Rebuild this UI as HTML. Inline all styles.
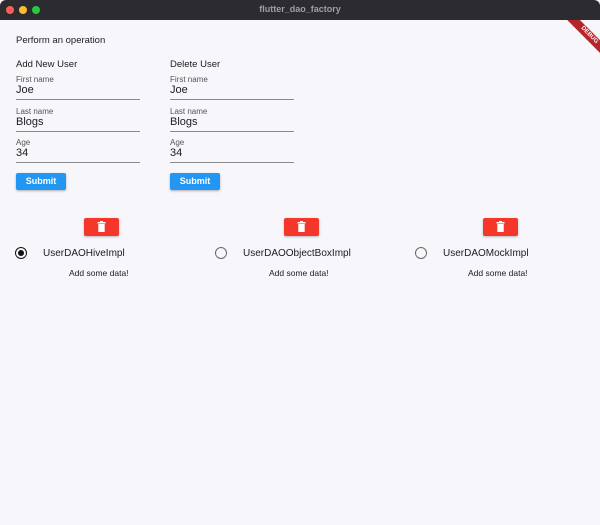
<!DOCTYPE html>
<html><head><style>
*{margin:0;padding:0;box-sizing:border-box}
body{width:600px;height:525px;overflow:hidden;background:#f7f6fa;font-family:"Liberation Sans",sans-serif;color:#1c1b1f;position:relative}
.bar{position:absolute;left:0;top:0;width:600px;height:20px;background:#2c2b2f;border-radius:6px 6px 0 0;z-index:2}
.dot{position:absolute;top:6px;width:8px;height:8px;border-radius:50%;z-index:3}
.title{position:absolute;top:4px;left:0;width:600px;text-align:center;font-size:9px;font-weight:bold;color:#a09fa3;z-index:3}
.t{position:absolute;white-space:nowrap}
.lab{font-size:8px;color:#555}
.val{font-size:11px}
.line{position:absolute;height:1px;background:#8a8a8e;width:124px}
.btn{position:absolute;width:50px;height:17px;background:#2196f3;border-radius:2px;color:#fff;font-size:9px;font-weight:bold;text-align:center;line-height:17px;box-shadow:0 1px 2px rgba(0,0,0,.3)}
.del{position:absolute;top:218px;width:35px;height:18px;background:#f4362b;border-radius:2px;box-shadow:0 1px 2px rgba(0,0,0,.25)}
.radio{position:absolute;top:247px;width:12px;height:12px;border-radius:50%;border:1.5px solid #666}
</style></head><body>
<div class="bar"></div>
<div class="dot" style="left:6px;background:#fe5f57"></div>
<div class="dot" style="left:19px;background:#febc2e"></div>
<div class="dot" style="left:32px;background:#28c840"></div>
<div class="title">flutter_dao_factory</div>
<div style="position:absolute;left:563px;top:31px;width:52px;height:9px;background:#b3262b;transform:rotate(45deg);color:#fff;font-size:6px;font-weight:bold;text-align:center;line-height:9px;z-index:1">DEBUG</div>

<div class="t" style="left:16px;top:35px;font-size:9.5px">Perform an operation</div>

<div class="t" style="left:16px;top:59px;font-size:9.5px">Add New User</div>
<div class="t lab" style="left:16px;top:75px">First name</div>
<div class="t val" style="left:16px;top:84px">Joe</div>
<div class="line" style="left:16px;top:99px"></div>
<div class="t lab" style="left:16px;top:107px">Last name</div>
<div class="t val" style="left:16px;top:116px">Blogs</div>
<div class="line" style="left:16px;top:131px"></div>
<div class="t lab" style="left:16px;top:138px">Age</div>
<div class="t val" style="left:16px;top:147px">34</div>
<div class="line" style="left:16px;top:162px"></div>
<div class="btn" style="left:16px;top:173px">Submit</div>

<div class="t" style="left:170px;top:59px;font-size:9.5px">Delete User</div>
<div class="t lab" style="left:170px;top:75px">First name</div>
<div class="t val" style="left:170px;top:84px">Joe</div>
<div class="line" style="left:170px;top:99px"></div>
<div class="t lab" style="left:170px;top:107px">Last name</div>
<div class="t val" style="left:170px;top:116px">Blogs</div>
<div class="line" style="left:170px;top:131px"></div>
<div class="t lab" style="left:170px;top:138px">Age</div>
<div class="t val" style="left:170px;top:147px">34</div>
<div class="line" style="left:170px;top:162px"></div>
<div class="btn" style="left:170px;top:173px">Submit</div>

<svg width="0" height="0" style="position:absolute"><defs><g id="tr"><rect x="-4" y="-4.5" width="8" height="1.5" fill="#fff"/><rect x="-1.5" y="-5.5" width="3" height="1.5" fill="#fff"/><rect x="-3.2" y="-2.5" width="6.4" height="8" fill="#fff"/></g></defs></svg>
<div class="del" style="left:84px"><svg width="35" height="18"><use href="#tr" x="17.5" y="8.5"/></svg></div>
<div class="del" style="left:284px"><svg width="35" height="18"><use href="#tr" x="17.5" y="8.5"/></svg></div>
<div class="del" style="left:483px"><svg width="35" height="18"><use href="#tr" x="17.5" y="8.5"/></svg></div>

<div class="radio" style="left:15px;border-color:#111"><div style="position:absolute;left:1.5px;top:1.5px;width:6px;height:6px;border-radius:50%;background:#111"></div></div>
<div class="radio" style="left:215px"></div>
<div class="radio" style="left:415px"></div>
<div class="t" style="left:43px;top:248px;font-size:10px">UserDAOHiveImpl</div>
<div class="t" style="left:243px;top:248px;font-size:10px">UserDAOObjectBoxImpl</div>
<div class="t" style="left:443px;top:248px;font-size:10px">UserDAOMockImpl</div>
<div class="t" style="left:69px;top:268px;font-size:8.5px">Add some data!</div>
<div class="t" style="left:269px;top:268px;font-size:8.5px">Add some data!</div>
<div class="t" style="left:468px;top:268px;font-size:8.5px">Add some data!</div>
</body></html>
